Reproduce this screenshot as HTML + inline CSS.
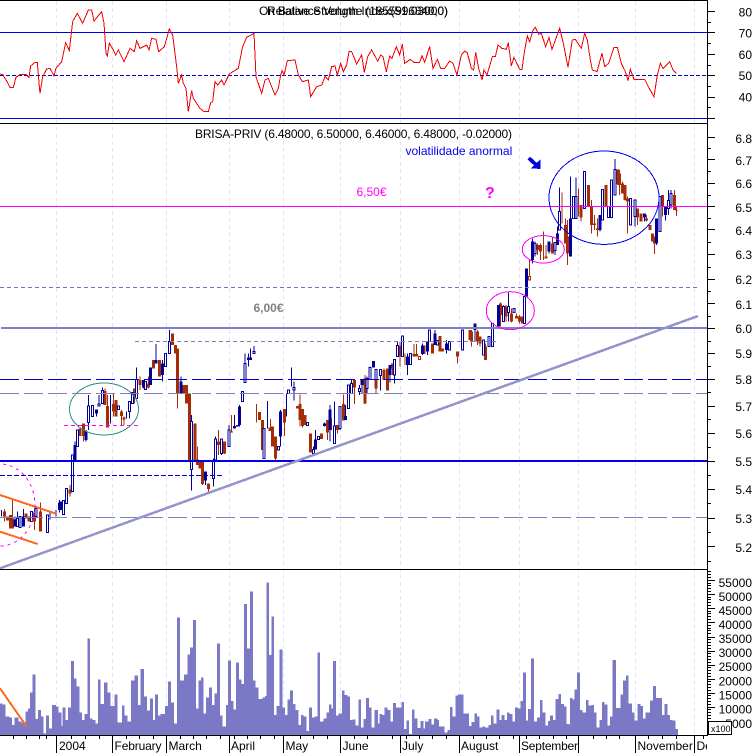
<!DOCTYPE html>
<html><head><meta charset="utf-8"><title>BRISA-PRIV</title>
<style>html,body{margin:0;padding:0;background:#fff;width:756px;height:753px;overflow:hidden}svg{display:block}text{font-family:"Liberation Sans",sans-serif;font-size:12px;fill:#000}</style></head>
<body>
<svg width="756" height="753" viewBox="0 0 756 753" xmlns="http://www.w3.org/2000/svg">
<rect width="756" height="753" fill="#fff"/>
<g shape-rendering="crispEdges">
<path d="M56.5 1V735M112.5 1V735M166.5 1V735M229.5 1V735M283.5 1V735M340.5 1V735M400.5 1V735M459.5 1V735M519.5 1V735M578.5 1V735M635.5 1V735M694.5 1V735" stroke="#e2e2ff" stroke-dasharray="4 3" fill="none"/>

<!-- RSI -->
<path d="M0 32.5H707M0 118.5H707" stroke="#0000f0" fill="none"/>
<path d="M0 75.5H707" stroke="#0000c8" stroke-dasharray="4 2" fill="none"/>
<polyline transform="scale(.33333)" fill="none" stroke="#f00000" stroke-width="3" points="0,222 8,224 20,243 30,262 40,262 48,232 60,224 78,224 87,232 92,198 105,187 112,187 118,260 120,280 128,230 140,207 150,205 162,227 168,205 185,185 197,128 208,152 218,65 232,40 248,70 265,30 275,30 282,63 305,35 312,70 318,160 322,168 328,130 340,150 347,165 355,150 372,185 390,145 403,155 410,122 420,145 440,135 447,150 455,115 468,118 476,155 493,140 508,87 518,105 530,200 535,250 545,225 550,250 558,265 565,335 575,272 580,295 600,325 612,335 625,335 632,308 638,305 645,245 653,255 665,240 672,255 688,222 715,205 728,140 740,112 762,100 768,230 785,280 795,240 805,235 825,285 835,265 842,225 846,212 852,225 862,182 885,180 895,225 907,245 925,240 932,290 950,260 965,255 975,230 985,240 995,200 1005,198 1012,225 1022,190 1030,215 1040,195 1047,155 1055,155 1070,192 1085,165 1093,217 1103,170 1115,150 1134,185"/>
<polyline transform="translate(378,0) scale(.33333)" fill="none" stroke="#f00000" stroke-width="3" points="0,182 8,165 15,170 25,215 35,168 42,175 55,140 65,165 73,132 80,190 97,178 108,187 125,187 132,167 140,187 155,140 165,205 178,178 188,205 200,205 215,183 225,190 237,225 250,165 260,153 268,158 280,205 287,210 293,157 302,205 312,240 318,210 327,225 343,170 352,170 360,135 372,145 385,148 391,128 400,198 408,172 425,208 432,208 440,150 448,108 455,125 465,90 472,82 482,103 490,100 503,140 513,112 522,148 545,85 555,125 570,202 583,120 592,118 610,145 620,100 628,120 637,180 643,210 657,215 672,160 680,200 692,190 708,142 718,142 730,190 742,215 750,242 757,208 768,238 790,238 800,238 812,262 828,290 838,225 847,190 855,205 875,185 885,210 895,220"/>

<!-- Candles A -->
<g transform="translate(0,330) scale(.33333)" fill="none">
<path stroke="#a52d06" stroke-width="3" d="M14 537V575M38 505V595M103 535V600M122 518V605M210 465V500M250 280V335M315 175V225M323 195V293M340 192V260M365 240V285M372 260V285M403 175V220M420 140V180M445 140V175M478 90V140M533 55V235M592 350V405M607 395V465M625 460V487M655 300V375M673 335V372M695 255V308"/>
<path stroke="#a52d06" stroke-width="9" d="M14 545V560M22 560V572M32 555V595M38 565V595M78 550V565M87 560V575M103 548V575M122 545V605M210 478V490M240 295V318M250 280V318M315 183V225M323 228V293M340 222V245M348 210V260M365 245V258M372 262V268M403 175V190M420 150V165M445 160V173M460 90V115M478 90V140M517 10V45M527 45V70M533 55V190M550 165V190M560 165V220M568 190V390M585 280V390M592 388V405M600 392V415M607 395V462M625 460V477M655 335V345M673 335V370M695 305V308"/>
<path stroke="#000099" stroke-width="3" d="M5 540V560M45 560V590M52 545V590M70 537V590M95 545V575M108 535V560M150 545V568M168 540V560M178 510V548M225 335V390M258 300V335M265 195V300M290 238V260M297 195V228M307 172V220M332 195V280M379 245V265M388 215V265M409 112V205M430 150V175M452 112V165M468 42V100M488 90V155M508 0V70M543 140V190M575 255V482M616 425V465M640 385V470M647 320V390M687 285V350M665 327V375M703 255V295M718 225V290M735 70V158M745 70V110M752 55V90M762 48V70"/>
<path stroke="#000099" stroke-width="9" d="M45 568V590M70 560V590M178 518V540M183 515V540M225 345V390M258 305V330M290 238V250M430 150V172M452 112V165M468 90V100M488 100V135M543 155V190M616 425V452M703 288V295M712 285V290M718 230V285M745 82V90M752 82V90"/>
<path stroke="#000099" stroke-width="3" fill="#fff" d="M49 565h6V590h-6zM57 560h6V592h-6zM92 545h6V575h-6zM105 535h6V560h-6zM139 555h6V607h-6zM187 512h6V553h-6zM197 475h6V520h-6zM215 375h6V485h-6zM229 300h6V350h-6zM262 228h6V278h-6zM275 226h6V260h-6zM294 222h6V228h-6zM304 182h6V220h-6zM352 228h6V238h-6zM385 215h6V245h-6zM394 188h6V220h-6zM406 148h6V205h-6zM434 155h6V178h-6zM494 70h6V110h-6zM505 35h6V70h-6zM572 275h6V418h-6zM637 395h6V445h-6zM644 327h6V390h-6zM662 327h6V370h-6zM684 300h6V350h-6zM724 185h6V215h-6zM732 100h6V158h-6zM759 65h6V70h-6z"/>
</g>

<!-- Candles B -->
<g transform="translate(240,330) scale(.33333)" fill="none">
<path stroke="#a52d06" stroke-width="3" d="M50 222V278M91 267V303M98 290V350M106 320V390M133 237V318M180 193V290M187 237V292M195 255V285M212 310V368M244 310V327M263 270V330M275 265V300M292 285V310M310 193V272M344 150V222M375 135V222M408 150V190M432 115V150M442 115V182M457 100V135M480 35V110M495 70V105M522 42V80M530 42V80M578 40V70M600 18V65M652 65V100M690 0V30"/>
<path stroke="#a52d06" stroke-width="9" d="M58 246V270M67 270V360M90 293V303M98 290V350M106 320V385M133 237V278M172 228V235M180 222V270M187 237V288M195 255V285M212 310V368M244 310V327M263 270V308M292 285V300M310 222V272M344 150V173M375 145V220M408 150V175M432 120V150M442 115V182M457 100V115M480 48V80M522 72V80M530 72V80M552 47V72M578 40V70M600 18V65M608 55V65M652 65V80M690 0V30"/>
<path stroke="#000099" stroke-width="3" d="M82 213V295M122 240V350M140 190V260M154 112V170M162 155V212M220 350V372M227 300V358M253 278V290M270 225V335M283 215V340M300 230V300M317 225V270M335 150V190M358 165V195M366 148V190M381 140V190M390 110V148M400 93V112M421 118V182M450 105V157M464 88V160M472 35V80M503 70V135M548 40V75M562 35V75M585 0V45M620 30V70"/>
<path stroke="#000099" stroke-width="9" d="M122 245V320M227 328V358M253 280V288M270 238V300M317 258V270M366 150V165M400 93V112M450 105V135M503 80V105M548 47V72M562 35V65M585 10V45M620 40V60"/>
<path stroke="#000099" stroke-width="3" fill="#fff" d="M69 295h6V385h-6zM112 350h6V360h-6zM143 180h6V190h-6zM159 172h6V180h-6zM199 278h6V287h-6zM217 358h6V370h-6zM232 320h6V328h-6zM280 288h6V340h-6zM297 230h6V295h-6zM322 165h6V235h-6zM332 160h6V190h-6zM355 175h6V185h-6zM378 145h6V175h-6zM387 112h6V148h-6zM405 118h6V148h-6zM418 118h6V137h-6zM461 88h6V135h-6zM469 47h6V80h-6zM484 18h6V80h-6zM509 70h6V103h-6zM565 0h6V35h-6zM589 32h6V45h-6zM625 35h6V60h-6zM664 0h6V60h-6z"/>
<path stroke="#a52d06" stroke-width="3" fill="#fff" d="M535 80h6V88h-6z"/>
</g>

<!-- Candles C -->
<g transform="translate(470,130) scale(.33333)" fill="none">
<path stroke="#a52d06" stroke-width="3" d="M5 600V650M22 600V645M30 620V650M47 640V690M92 518V590M100 525V575M108 525V575M125 535V578M140 550V565M148 555V580M178 390V450M203 340V375M212 340V390M220 305V390M228 345V385M247 320V370M276 188V280M286 265V340M293 270V405M325 175V260M333 225V275M355 165V230M365 210V310M373 255V300M383 265V320M408 165V230M442 118V165M448 118V195M457 155V190M465 175V212M472 200V310M503 235V285M513 250V275M530 255V275M540 285V300M548 310V335M553 320V372M578 195V260M613 180V240M620 230V258"/>
<path stroke="#a52d06" stroke-width="9" d="M5 605V635M22 605V635M30 620V640M47 650V690M92 520V555M108 530V560M125 550V575M140 558V565M148 560V575M158 560V580M203 345V360M212 345V365M228 380V385M247 340V370M286 285V340M293 320V370M333 225V262M355 165V230M365 230V285M373 280V285M383 295V300M408 165V230M442 118V162M448 130V165M457 160V190M465 165V210M472 205V215M503 235V262M513 250V275M530 265V272M540 285V300M548 310V335M553 335V340M578 195V230M613 195V240M620 240V242"/>
<path stroke="#000099" stroke-width="3" d="M15 580V635M85 525V590M115 488V575M163 495V580M170 415V500M187 325V400M195 335V380M237 335V370M255 337V375M262 290V345M268 172V300M302 140V380M310 200V265M318 142V265M343 125V235M390 255V305M398 178V270M415 230V262M435 87V195M482 205V285M495 210V290M523 250V275M560 265V345M570 200V305M587 230V272M595 180V255M603 180V235"/>
<path stroke="#000099" stroke-width="9" d="M15 580V600M85 525V590M170 415V500M187 335V390M237 335V365M262 310V345M302 265V380M390 255V300M523 250V262M560 265V340M587 230V255"/>
<path stroke="#000099" stroke-width="3" fill="#fff" d="M37 630h6V675h-6zM54 620h6V650h-6zM64 580h6V650h-6zM97 530h6V575h-6zM112 530h6V548h-6zM129 535h6V548h-6zM160 500h6V580h-6zM192 340h6V370h-6zM252 337h6V362h-6zM265 244h6V300h-6zM307 200h6V265h-6zM315 200h6V265h-6zM340 125h6V235h-6zM395 178h6V270h-6zM412 230h6V262h-6zM422 150h6V262h-6zM432 118h6V195h-6zM479 205h6V285h-6zM492 210h6V260h-6zM567 200h6V305h-6zM592 212h6V235h-6zM600 190h6V225h-6z"/>
<path stroke="#a52d06" stroke-width="3" fill="#fff" d="M175 440h6V450h-6z"/>
<polygon points="172,88 180,80 200,98 212,88 212,117 182,115 192,106" fill="#0000e0" stroke="none"/>
</g>

<!-- Price overlay lines -->
<path d="M0 206.5H707" stroke="#ff00ff" stroke-width="1" fill="none"/>
<path d="M0 287.5H700" stroke="#7070c8" stroke-dasharray="4 3" fill="none"/>
<path d="M1 328H707" stroke="#7f7fc8" stroke-width="2" fill="none"/>
<path d="M135 341.5H498" stroke="#7f7fb0" stroke-dasharray="4 3" fill="none"/>
<path d="M0 379.5H707" stroke="#0000c8" stroke-dasharray="19 5" fill="none"/>
<path d="M0 393.5H707" stroke="#8080c0" stroke-dasharray="19 5" fill="none"/>
<path d="M0 461H707" stroke="#0000e8" stroke-width="2" fill="none"/>
<path d="M0 475.5H224" stroke="#0000c8" stroke-dasharray="5 2" fill="none"/>
<path d="M0 517.5H707" stroke="#8080c0" stroke-dasharray="19 5" fill="none"/>
<path d="M64 425.5H138" stroke="#ff00ff" stroke-dasharray="4 3" fill="none"/>
<path d="M0 568.3L698 316" stroke="#9494cc" stroke-width="2.5" fill="none"/>
<path d="M0 495L57 514M0 531.7L37.7 544" stroke="#ff6a20" stroke-width="2" fill="none"/>
<ellipse cx="0" cy="505" rx="35" ry="41" fill="none" stroke="#ff00ff" stroke-dasharray="3 4"/>
<ellipse cx="104" cy="409" rx="34.5" ry="26" fill="none" stroke="#2f8f80"/>
<ellipse cx="604" cy="197.7" rx="55" ry="46.7" fill="none" stroke="#0000f0"/>
<ellipse cx="543.3" cy="249.3" rx="21" ry="13.7" fill="none" stroke="#ff00ff"/>
<ellipse cx="510.3" cy="310.7" rx="24" ry="19" fill="none" stroke="#ff00ff"/>

<!-- Volume -->
<path transform="translate(0,570) scale(.33333)" fill="#7b79c5" d="M0 495V400H8V403H16V440H28V443H36V465H44V442H56V455H64V458H76V425H84V415H90V367H98V313H107V447H114V420H123V440H131V490H138V437H147V475H156V405H168V410H176V428H184V468H187V412H196V450H204V412H213V273H222V325H230V350H238V428H246V450H254V432H262V205H270V445H278V450H286V460H294V328H302V402H312V337H322V367H332V408H343V373H352V458H366V406H374V437H382V455H393V332H404V316H414V405H422V297H432V380H441V422H450V385H459V450H465V373H474V437H482V432H495V408H504V335H513V397H522V460H531V142H540V332H552V313H562V253H570V233H579V150H588V415H595V332H603V323H611V430H618V382H627V352H636V405H643V370H651V220H660V436H668V470H678V405H684V271H693V393H700V418H708V277H717V328H725V342H732V102H741V236H750V64H759V332H767V353H775V387H787V383H795V378H799V38H807V255H814V140H822V435H830V408H838V238H847V412H855V435H862V388H870V361H879V402H887V420H895V465H903V435H911V440H919V483H927V412H936V442H944V440H952V247H960V455H970V445H979V427H987V403H995V415H999V273H1008V437H1016V430H1026V361H1034V375H1042V380H1050V450H1058V448H1066V467H1075V388H1083V473H1091V447H1098V384H1107V412H1115V472H1124V420H1134V495Z"/>
<path transform="translate(378,570) scale(.33333)" fill="#7b79c5" d="M0 495V460H4V432H12V435H20V412H28V420H38V455H45V399H54V412H64V413H71V396H78V477H85V452H93V492H102V418H110V445H118V474H128V453H136V475H141V455H152V447H160V463H168V445H178V450H183V470H200V487H208V480H216V411H224V440H232V376H240V373H257V430H273V468H281V456H289V430H297V440H305V473H313V469H321V473H331V465H339V436H347V460H356V418H365V450H370V435H379V450H387V427H395V432H403V455H411V412H420V415H428V393H435V307H444V452H450V417H459V265H468V455H477V443H486V390H494V427H502V467H510V453H516V437H525V450H533V387H541V372H549V402H558V410H566V462H574V465H576V384H584V388H589V358H597V308H606V420H614V427H624V390H632V406H640V405H648V427H656V473H664V450H672V396H680V404H688V467H696V440H704V270H714V414H727V373H735V332H744V316H752V400H762V428H770V452H778V402H787V408H795V445H803V428H816V392H825V348H834V384H852V435H860V402H868V435H876V450H884V452H892V477H900V495Z"/>
<path d="M0 688.3L26.7 726.7" stroke="#ff6a20" stroke-width="2" fill="none"/>

<!-- Frame -->
<path d="M0 .5H707M0 123.5H707M0 569.5H707M0 735.5H707M707.5 0V736" stroke="#000" fill="none"/>
<path d="M707 11.5H715M707 32.5H715M707 54.5H715M707 75.5H715M707 97.5H715M707 118.5H715M707 22.5H711M707 43.5H711M707 65.5H711M707 86.5H711M707 107.5H711
M707 137.5H715M707 159.5H715M707 183.5H715M707 206.5H715M707 229.5H715M707 254.5H715M707 279.5H715M707 303.5H715M707 328.5H715M707 353.5H715M707 379.5H715M707 406.5H715M707 433.5H715M707 461.5H715M707 489.5H715M707 518.5H715M707 546.5H715
M707 148.5H711M707 171.5H711M707 195.5H711M707 218.5H711M707 242.5H711M707 267.5H711M707 291.5H711M707 316.5H711M707 341.5H711M707 366.5H711M707 392.5H711M707 419.5H711M707 447.5H711M707 475.5H711M707 503.5H711M707 532.5H711M707 561.5H711
M707 580.5H715M707 594.5H715M707 608.5H715M707 622.5H715M707 637.5H715M707 651.5H715M707 665.5H715M707 679.5H715M707 693.5H715M707 707.5H715M707 721.5H715
M707 732.5H711M707 729.5H711M707 726.5H711M707 724.5H711M707 718.5H711M707 715.5H711M707 712.5H711M707 709.5H711M707 704.5H711M707 701.5H711M707 698.5H711M707 695.5H711M707 690.5H711M707 687.5H711M707 684.5H711M707 681.5H711M707 676.5H711M707 673.5H711M707 670.5H711M707 667.5H711M707 662.5H711M707 659.5H711M707 656.5H711M707 653.5H711M707 648.5H711M707 645.5H711M707 642.5H711M707 639.5H711M707 633.5H711M707 630.5H711M707 628.5H711M707 625.5H711M707 619.5H711M707 616.5H711M707 613.5H711M707 611.5H711M707 605.5H711M707 602.5H711M707 599.5H711M707 597.5H711M707 591.5H711M707 588.5H711M707 585.5H711M707 583.5H711M707 577.5H711M707 574.5H711M707 571.5H711" stroke="#000" fill="none"/>
<path d="M56.5 735V753M112.5 735V753M166.5 735V753M229.5 735V753M283.5 735V753M340.5 735V753M400.5 735V753M459.5 735V753M519.5 735V753M578.5 735V753M635.5 735V753M694.5 735V753
M13.5 735V739M26.5 735V739M39.5 735V739M46.5 735V739M71.5 735V739M85.5 735V739M99.5 735V739M126.5 735V739M139.5 735V739M153.5 735V739M180.5 735V739M193.5 735V739M206.5 735V739M220.5 735V739M234.5 735V739M247.5 735V739M260.5 735V739M274.5 735V739M300.5 735V739M313.5 735V739M327.5 735V739M354.5 735V739M367.5 735V739M392.5 735V739M406.5 735V739M419.5 735V739M432.5 735V739M446.5 735V739M473.5 735V739M486.5 735V739M499.5 735V739M513.5 735V739M526.5 735V739M539.5 735V739M553.5 735V739M566.5 735V739M593.5 735V739M606.5 735V739M619.5 735V739M648.5 735V739M662.5 735V739M676.5 735V739M703.5 735V739" stroke="#000" fill="none"/>
</g>

<!-- Text -->
<text x="259" y="15" textLength="189" lengthAdjust="spacing">On Balance Volume (1855996840,0)</text>
<text x="267" y="15" textLength="181" lengthAdjust="spacing">Relative Strength Index(51.03000)</text>
<text x="195" y="138" textLength="317" lengthAdjust="spacing">BRISA-PRIV (6.48000, 6.50000, 6.46000, 6.48000, -0.02000)</text>
<text x="405.5" y="155" style="fill:#0000f0">volatilidade anormal</text>
<text x="356.5" y="196" style="fill:#ff00ff">6,50€</text>
<text x="253.5" y="312" style="fill:#808080;font-weight:bold">6,00€</text>
<text x="485" y="198" style="fill:#ff00ff;font-weight:bold;font-size:16px">?</text>

<g text-anchor="end">
<text x="752" y="16.5">80</text><text x="752" y="37.5">70</text><text x="752" y="59">60</text><text x="752" y="80">50</text><text x="752" y="101.5">40</text>
<text x="752" y="143">6.8</text><text x="752" y="165">6.7</text><text x="752" y="188">6.6</text><text x="752" y="212">6.5</text><text x="752" y="235">6.4</text><text x="752" y="259">6.3</text><text x="752" y="284">6.2</text><text x="752" y="309">6.1</text><text x="752" y="333">6.0</text><text x="752" y="358">5.9</text><text x="752" y="384">5.8</text><text x="752" y="411">5.7</text><text x="752" y="438">5.6</text><text x="752" y="466">5.5</text><text x="752" y="494">5.4</text><text x="752" y="523">5.3</text><text x="752" y="552">5.2</text>
<text x="752" y="587">55000</text><text x="752" y="601">50000</text><text x="752" y="615">45000</text><text x="752" y="629">40000</text><text x="752" y="643">35000</text><text x="752" y="657">30000</text><text x="752" y="671">25000</text><text x="752" y="685.5">20000</text><text x="752" y="699.5">15000</text><text x="752" y="713.5">10000</text><text x="752" y="728">5000</text>
</g>

<rect x="708.5" y="721.5" width="23" height="13" fill="#fff" stroke="#000" shape-rendering="crispEdges"/>
<text x="711" y="732" style="font-size:9px">x100</text>

<text x="59" y="750">2004</text>
<text x="114.5" y="750" textLength="47" lengthAdjust="spacing">February</text>
<text x="168.5" y="750">March</text>
<text x="231" y="750">April</text>
<text x="285.5" y="750">May</text>
<text x="342.5" y="750">June</text>
<text x="402" y="750">July</text>
<text x="461" y="750">August</text>
<text x="521" y="750" textLength="57" lengthAdjust="spacing">September</text>
<text x="637.5" y="750">November</text>
<svg x="696.5" y="738" width="10.5" height="15"><text x="0" y="12">De</text></svg>
</svg>
</body></html>
